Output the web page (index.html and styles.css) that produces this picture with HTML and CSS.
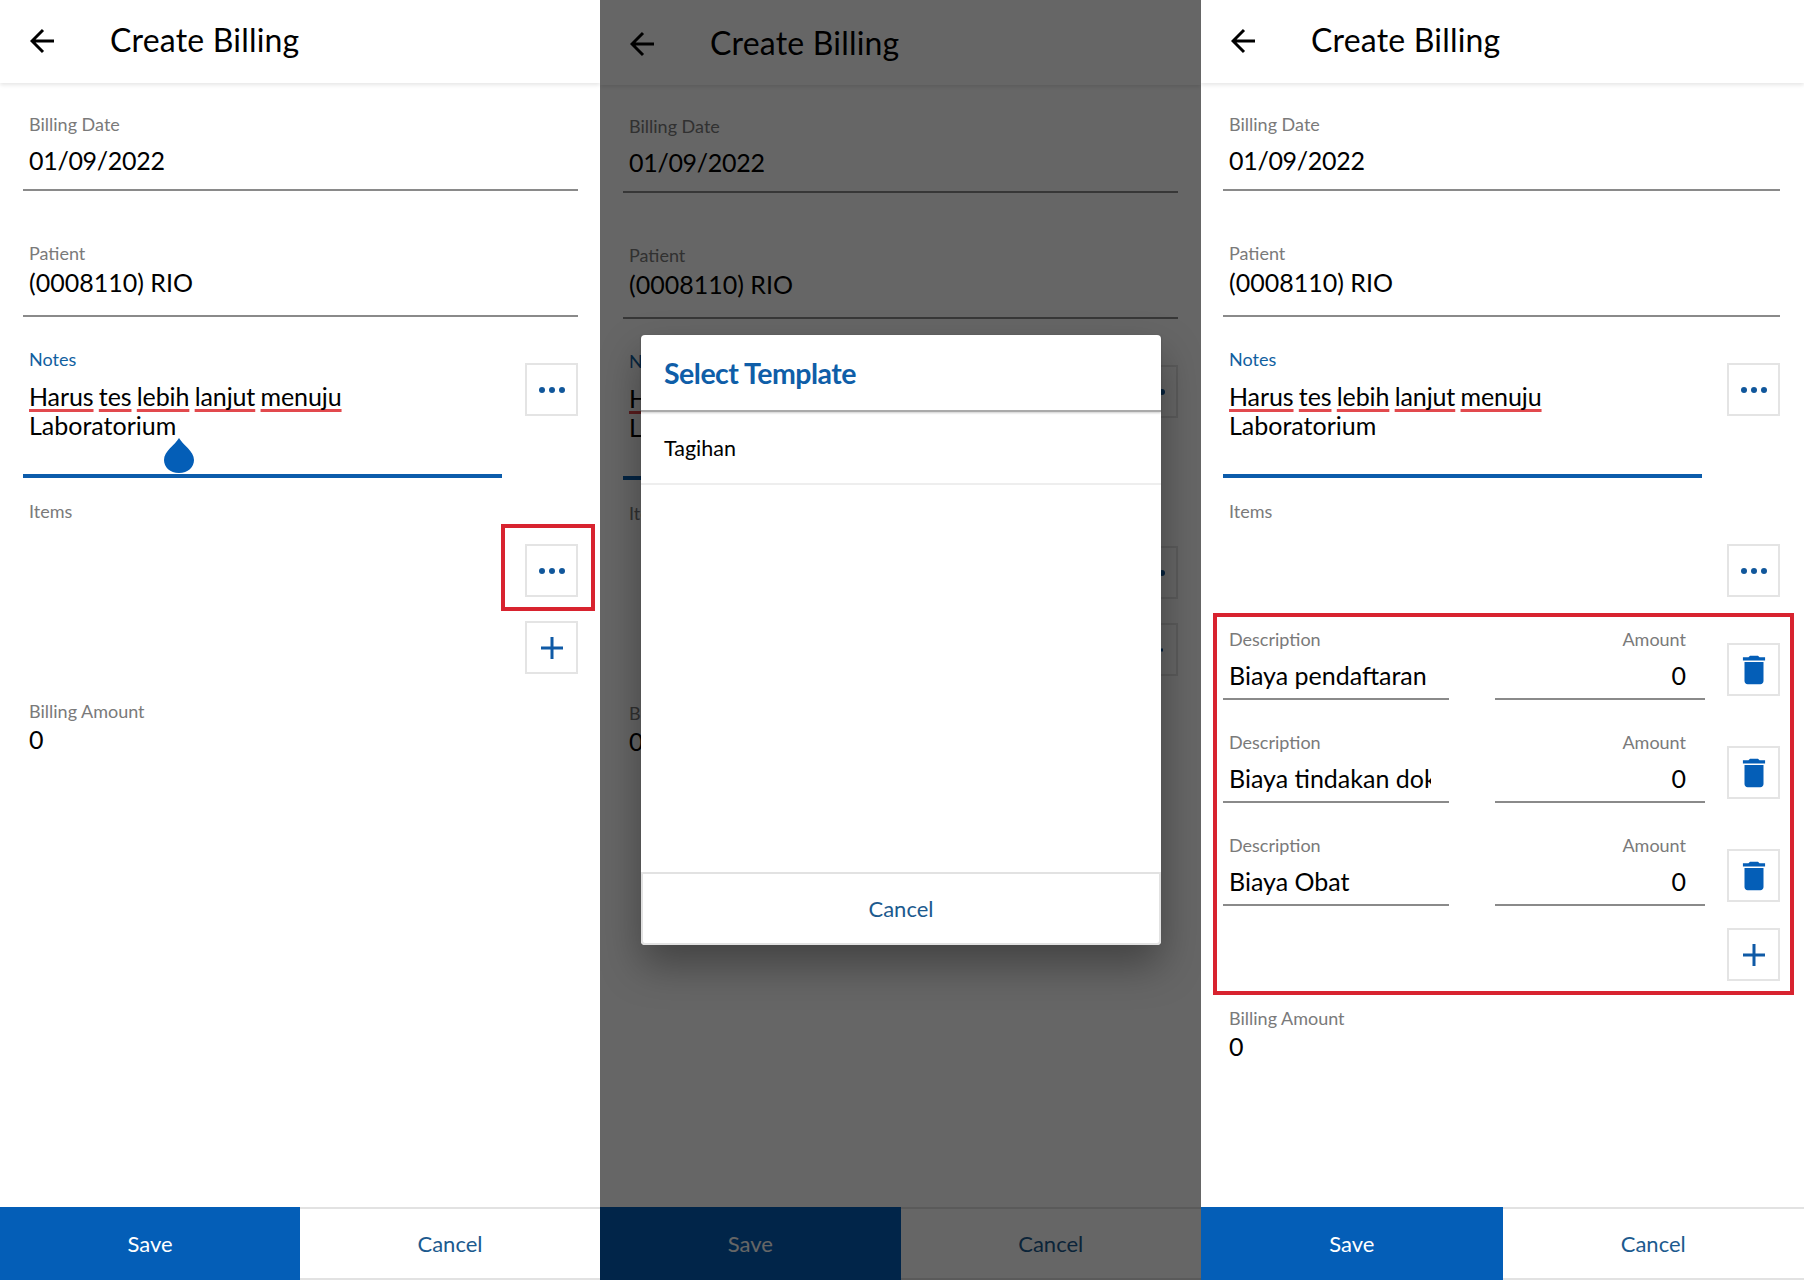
FILE: index.html
```html
<!DOCTYPE html>
<html lang="en">
<head>
<meta charset="utf-8">
<title>Create Billing</title>
<link rel="stylesheet" href="styles.css">
</head>
<body>
<div class="screens">

  <section class="panel panel-a">
    <header class="topbar">
      <svg class="back" viewBox="0 0 26 26"><path d="M24 13H2.500M13 2 2 13l11 11"/></svg>
      <h1>Create Billing</h1>
    </header>
    <main class="form">
      <div class="field first"><div class="label">Billing Date</div><div class="value date">01/09/2022</div></div>
      <div class="field patient"><div class="label">Patient</div><div class="value">(0008110) RIO</div></div>
      <div class="notes-row">
        <div class="notes">
          <div class="label accent">Notes</div>
          <div class="note-text"><span class="spell"><span class="sp">Harus</span> <span class="sp">tes</span> <span class="sp">lebih</span> <span class="sp">lanjut</span> <span class="sp">menuju</span></span><br>Laboratorium</div>
          <svg class="drop" viewBox="0 0 30 35"><path d="M15 0C19 7 30 13 30 22 30 29 24 35 15 35 6 35 0 29 0 22 0 13 11 7 15 0Z"/></svg>
        </div>
        <button class="sq notes-btn"><svg viewBox="0 0 26 8"><circle cx="3" cy="4" r="3"/><circle cx="13" cy="4" r="3"/><circle cx="23" cy="4" r="3"/></svg></button>
      </div>
      <div class="label items-label">Items</div>
      <div class="actions">
        <div class="mark-wrap">
          <button class="sq"><svg viewBox="0 0 26 8"><circle cx="3" cy="4" r="3"/><circle cx="13" cy="4" r="3"/><circle cx="23" cy="4" r="3"/></svg></button>
          <div class="mark mark-btn"></div>
        </div>
        <button class="sq plus-btn"><svg class="plus" viewBox="0 0 22 22"><path d="M11 0v22M0 11h22"/></svg></button>
      </div>
      <div class="label amount-label">Billing Amount</div>
      <div class="value amount-value">0</div>
    </main>
    <footer class="bottom">
      <button class="save">Save</button>
      <button class="cancel">Cancel</button>
    </footer>
  </section>

  <section class="panel panel-b">
    <header class="topbar shifted">
      <svg class="back" viewBox="0 0 26 26"><path d="M24 13H2.500M13 2 2 13l11 11"/></svg>
      <h1>Create Billing</h1>
    </header>
    <main class="form">
      <div class="field first"><div class="label">Billing Date</div><div class="value date">01/09/2022</div></div>
      <div class="field patient"><div class="label">Patient</div><div class="value">(0008110) RIO</div></div>
      <div class="notes-row">
        <div class="notes">
          <div class="label accent">Notes</div>
          <div class="note-text"><span class="spell"><span class="sp">Harus</span> <span class="sp">tes</span> <span class="sp">lebih</span> <span class="sp">lanjut</span> <span class="sp">menuju</span></span><br>Laboratorium</div>
        </div>
        <button class="sq notes-btn"><svg viewBox="0 0 26 8"><circle cx="3" cy="4" r="3"/><circle cx="13" cy="4" r="3"/><circle cx="23" cy="4" r="3"/></svg></button>
      </div>
      <div class="label items-label">Items</div>
      <div class="actions">
        <button class="sq"><svg viewBox="0 0 26 8"><circle cx="3" cy="4" r="3"/><circle cx="13" cy="4" r="3"/><circle cx="23" cy="4" r="3"/></svg></button>
        <button class="sq plus-btn"><svg class="plus" viewBox="0 0 22 22"><path d="M11 0v22M0 11h22"/></svg></button>
      </div>
      <div class="label amount-label">Billing Amount</div>
      <div class="value amount-value">0</div>
    </main>
    <footer class="bottom">
      <button class="save">Save</button>
      <button class="cancel">Cancel</button>
    </footer>
    <div class="scrim"></div>
    <div class="modal">
      <div class="modal-title">Select Template</div>
      <div class="modal-item">Tagihan</div>
      <div class="modal-space"></div>
      <div class="modal-cancel">Cancel</div>
    </div>
  </section>

  <section class="panel panel-c">
    <header class="topbar">
      <svg class="back" viewBox="0 0 26 26"><path d="M24 13H2.500M13 2 2 13l11 11"/></svg>
      <h1>Create Billing</h1>
    </header>
    <main class="form">
      <div class="field first"><div class="label">Billing Date</div><div class="value date">01/09/2022</div></div>
      <div class="field patient"><div class="label">Patient</div><div class="value">(0008110) RIO</div></div>
      <div class="notes-row">
        <div class="notes">
          <div class="label accent">Notes</div>
          <div class="note-text"><span class="spell"><span class="sp">Harus</span> <span class="sp">tes</span> <span class="sp">lebih</span> <span class="sp">lanjut</span> <span class="sp">menuju</span></span><br>Laboratorium</div>
        </div>
        <button class="sq notes-btn"><svg viewBox="0 0 26 8"><circle cx="3" cy="4" r="3"/><circle cx="13" cy="4" r="3"/><circle cx="23" cy="4" r="3"/></svg></button>
      </div>
      <div class="label items-label">Items</div>
      <div class="actions">
        <button class="sq"><svg viewBox="0 0 26 8"><circle cx="3" cy="4" r="3"/><circle cx="13" cy="4" r="3"/><circle cx="23" cy="4" r="3"/></svg></button>
      </div>
      <div class="lines">
        <div class="line">
          <div class="col-desc"><div class="label">Description</div><div class="value clip"><span>Biaya pendaftaran</span></div></div>
          <div class="col-amt"><div class="label">Amount</div><div class="value">0</div></div>
          <button class="sq trash-btn"><svg class="trash" viewBox="0 0 24 24"><path d="M6 19c0 1.100.9 2 2 2h8c1.100 0 2-.9 2-2V7H6v12zM19 4h-3.500l-1-1h-5l-1 1H5v2h14V4z"/></svg></button>
        </div>
        <div class="line">
          <div class="col-desc"><div class="label">Description</div><div class="value clip"><span>Biaya tindakan dokter</span></div></div>
          <div class="col-amt"><div class="label">Amount</div><div class="value">0</div></div>
          <button class="sq trash-btn"><svg class="trash" viewBox="0 0 24 24"><path d="M6 19c0 1.100.9 2 2 2h8c1.100 0 2-.9 2-2V7H6v12zM19 4h-3.500l-1-1h-5l-1 1H5v2h14V4z"/></svg></button>
        </div>
        <div class="line">
          <div class="col-desc"><div class="label">Description</div><div class="value clip"><span>Biaya Obat</span></div></div>
          <div class="col-amt"><div class="label">Amount</div><div class="value">0</div></div>
          <button class="sq trash-btn"><svg class="trash" viewBox="0 0 24 24"><path d="M6 19c0 1.100.9 2 2 2h8c1.100 0 2-.9 2-2V7H6v12zM19 4h-3.500l-1-1h-5l-1 1H5v2h14V4z"/></svg></button>
        </div>
        <div class="lines-add"><button class="sq"><svg class="plus" viewBox="0 0 22 22"><path d="M11 0v22M0 11h22"/></svg></button></div>
        <div class="mark mark-lines"></div>
      </div>
      <div class="label amount-label after-lines">Billing Amount</div>
      <div class="value amount-value">0</div>
    </main>
    <footer class="bottom">
      <button class="save">Save</button>
      <button class="cancel">Cancel</button>
    </footer>
  </section>

</div>
</body>
</html>
```
FILE: styles.css
```css
* { box-sizing: border-box; }
html, body { margin: 0; padding: 0; background: #fff; }
body { font-family: Lato, "Open Sans", sans-serif; color: #000; width: 1804px; height: 1284px; overflow: hidden; }

.screens { display: flex; height: 1280px; }
.panel { position: relative; display: flex; flex-direction: column; height: 1280px; background: #fff; overflow: hidden; }
.panel-a { width: 600px; }
.panel-b { width: 601px; }
.panel-c { width: 603px; }

.topbar { display: flex; align-items: center; height: 83px; flex: none; padding: 0 0 4px 30px; background: #fff; box-shadow: 0 2px 4px rgba(0,0,0,.1); position: relative; }
.topbar.shifted { height: 85px; padding-bottom: 0; }
.topbar h1 { margin: 0 0 0 54px; font-size: 32px; font-weight: 400; line-height: 40px; letter-spacing: .2px; }
.back { width: 26px; height: 26px; margin-top: 2px; fill: none; stroke: #000; stroke-width: 3; }

.form { flex: 1; display: flex; flex-direction: column; padding: 0 23px; }
.panel-a .form { padding-right: 22px; }
.label { font-size: 18px; line-height: 22px; font-weight: 400; color: #7a7a7a; padding-left: 6px; }
.value { font-size: 25px; line-height: 30px; padding-left: 6px; }
.date { letter-spacing: -.3px; }

.field { border-bottom: 2px solid #8a8a8a; }
.first { margin-top: 30px; padding-bottom: 14px; }
.first .value { margin-top: 10px; }
.patient { margin-top: 51px; padding-bottom: 18px; }
.patient .value { margin-top: 3px; }

.notes-row { display: flex; justify-content: space-between; align-items: flex-start; margin-top: 31px; }
.notes { position: relative; width: 479px; border-bottom: 4px solid #0c5cab; padding-bottom: 34px; }
.accent { color: #11609f; }
.note-text { font-size: 25px; line-height: 29px; margin-top: 12px; padding-left: 6px; }
.spell { word-spacing: -1px; letter-spacing: -.1px; }
.sp { text-decoration: underline; text-decoration-color: #e2494d; text-decoration-thickness: 3px; text-underline-offset: 3px; text-decoration-skip-ink: none; }
.drop { position: absolute; left: 141px; top: 90px; width: 30px; height: 35px; fill: #045eb7; }

.sq { display: flex; align-items: center; justify-content: center; width: 53px; height: 53px; padding: 0; background: #fff; border: 2px solid #e4e4e4; flex: none; }
.sq svg { width: 26px; height: 8px; fill: #11579b; }
.sq svg.plus { width: 22px; height: 22px; fill: none; stroke: #0f5aa6; stroke-width: 3; }
.sq svg.trash { width: 38px; height: 38px; fill: #045eb7; }
.notes-btn { margin-top: 15px; }

.items-label { margin-top: 22px; }
.actions { display: flex; flex-direction: column; align-items: flex-end; margin-top: 22px; }
.plus-btn { margin-top: 24px; }
.mark-wrap { position: relative; }
.mark { position: absolute; border: 4px solid #d8232f; pointer-events: none; }
.mark-btn { left: -24px; right: -17px; top: -20px; bottom: -14px; }

.amount-label { margin-top: 26px; }
.amount-value { margin-top: 2px; }

.panel-c .form { padding-left: 22px; padding-right: 24px; }
.lines { position: relative; margin-top: 31px; }
.line { display: flex; align-items: flex-start; margin-bottom: 31px; }
.line:nth-of-type(3) { margin-bottom: 22px; }
.col-desc { width: 226px; border-bottom: 2px solid #8a8a8a; }
.col-amt { width: 210px; margin-left: 46px; border-bottom: 2px solid #8a8a8a; text-align: right; padding-right: 19px; }
.col-desc .value, .col-amt .value { margin-top: 10px; padding-bottom: 8px; }
.clip { width: 208px; overflow: hidden; white-space: nowrap; }
.trash-btn { margin: 15px 0 0 22px; }
.lines-add { display: flex; justify-content: flex-end; }
.mark-lines { left: -10px; right: -14px; top: -15px; bottom: -14px; }
.after-lines { margin-top: 26px; }

.bottom { display: flex; flex: none; height: 73px; }
.save, .cancel { flex: 1; font-family: inherit; font-size: 22px; padding: 0; border: 0; }
.save { background: #045eb7; color: #fff; }
.cancel { background: #fff; color: #1c5a8e; border-top: 2px solid #e2e2e2; border-bottom: 2px solid #e2e2e2; }

.scrim { position: absolute; inset: 0; background: rgba(0,0,0,.6); }
.modal { position: absolute; left: 41px; top: 335px; width: 520px; height: 610px; display: flex; flex-direction: column; background: #fff; border-radius: 4px; box-shadow: 0 20px 40px rgba(0,0,0,.35); }
.modal-title { height: 77px; flex: none; padding: 19px 0 0 23px; font-size: 28.500px; line-height: 38px; font-weight: 700; color: #0f5ea8; letter-spacing: -.5px; border-bottom: 2px solid #aaa; box-shadow: 0 1px 2px rgba(0,0,0,.2); }
.modal-item { height: 73px; flex: none; display: flex; align-items: center; padding-left: 23px; font-size: 21.500px; border-bottom: 2px solid #eee; }
.modal-space { flex: 1; }
.modal-cancel { height: 73px; flex: none; display: flex; align-items: center; justify-content: center; font-size: 22px; color: #1c5a8e; border: 2px solid #e2e2e2; border-radius: 0 0 4px 4px; }
```
